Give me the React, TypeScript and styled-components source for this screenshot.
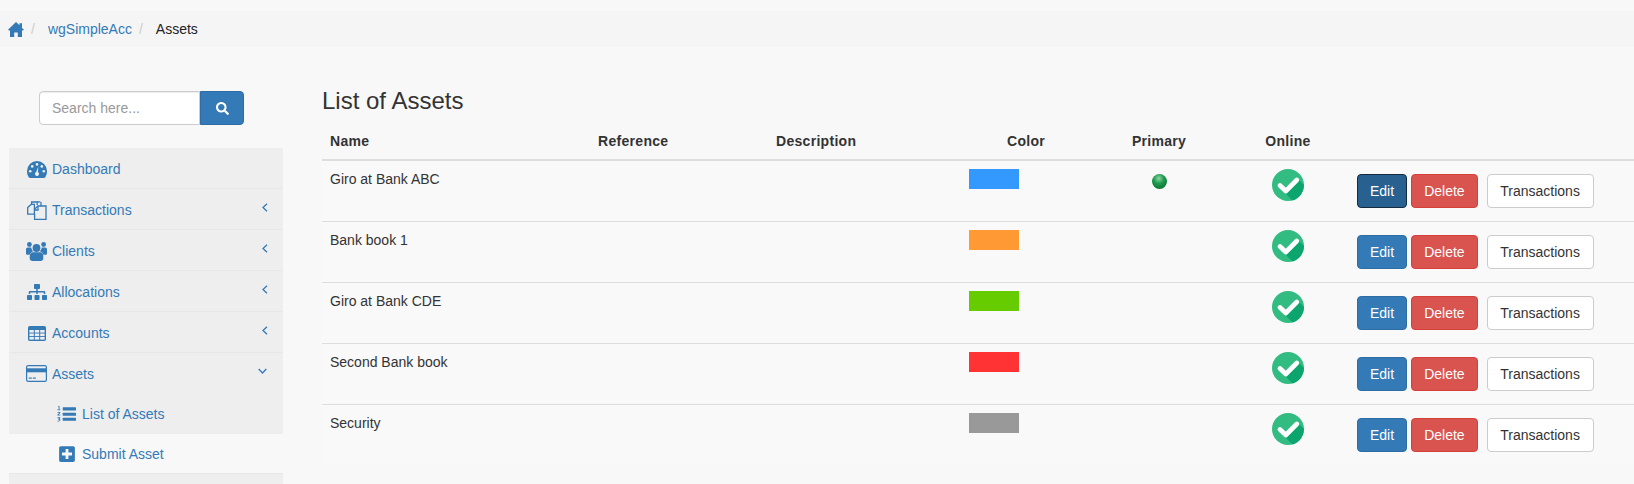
import styled, { createGlobalStyle } from 'styled-components';
import { FaPlusSquare, FaSearch, FaSitemap } from 'react-icons/fa';

const GlobalStyle = createGlobalStyle`
  html, body {
    margin: 0;
    padding: 0;
    height: 484px;
    overflow: hidden;
    background: #f8f8f8;
    color: #333;
    font-family: "Liberation Sans", Arial, sans-serif;
    font-size: 14px;
    line-height: 20px;
  }
  * { box-sizing: border-box; }
`;

const assets = [
  { name: 'Giro at Bank ABC', color: '#3399ff', primary: true, active: true },
  { name: 'Bank book 1', color: '#ff9933' },
  { name: 'Giro at Bank CDE', color: '#66cc00' },
  { name: 'Second Bank book', color: '#ff3333' },
  { name: 'Security', color: '#999999' },
];

const HomeIcon = () => (
  <svg width="16" height="15" viewBox="0 0 16 15" fill="currentColor">
    <path d="M8 0 11.500 3.200V1.200h2.500v4.800L16 7.800 15 8.600H14V15H9.800v-4.400H6.200V15H2V8.600H1L0 7.800z" />
  </svg>
);

const DashboardIcon = () => (
  <svg width="20" height="17" viewBox="0 0 20 17">
    <path d="M10 0a10 10 0 0 1 10 10c0 2.600-.7 4.600-1.600 6a2 2 0 0 1-1.600 1H3.200a2 2 0 0 1-1.600-1C.7 14.600 0 12.600 0 10A10 10 0 0 1 10 0z" fill="currentColor" />
    <g fill="#eee">
      <circle cx="3.200" cy="10.300" r="1.300" />
      <circle cx="5.200" cy="5.400" r="1.300" />
      <circle cx="10" cy="3.400" r="1.300" />
      <circle cx="16.800" cy="10.300" r="1.300" />
      <circle cx="14.800" cy="5.400" r="1.300" />
      <path d="M11.300 5.600 10.900 11.300a1.900 1.900 0 1 1-1.800 0z" />
    </g>
  </svg>
);

const FilesIcon = () => (
  <svg width="20" height="19" viewBox="0 0 20 19" fill="none" stroke="currentColor" strokeWidth="1.300">
    <path d="M.7 6.600 4.200 3.400h3.200v9.800H.7z" />
    <path d="M4.600 3V1h5.600v3" />
    <path d="M7.400 8.400 11 5h8v13.300H7.600V13" />
    <path d="M11 5.200V9H7.800" />
    <path d="M14 .9v4" />
    <path d="M10.200.9h3.200" />
  </svg>
);

const UsersIcon = () => (
  <svg width="21" height="19" viewBox="0 0 21 19" fill="currentColor">
    <circle cx="3.400" cy="2.500" r="2.400" />
    <circle cx="17.600" cy="2.500" r="2.400" />
    <circle cx="10.500" cy="6" r="3.900" />
    <path d="M1.800 5.400h3.400c.4 1.800 1 3 2.200 3.900-2 .6-3.300 1.900-3.800 3.500H1.500C.5 12.800 0 12.300 0 11.300V7.300C0 6.200.7 5.400 1.800 5.400z" />
    <path d="M19.200 5.400h-3.400c-.4 1.800-1 3-2.200 3.900 2 .6 3.300 1.900 3.800 3.500h2.100c1 0 1.500-.5 1.500-1.500V7.300c0-1.100-.7-1.900-1.800-1.900z" />
    <path d="M7 10.300h7c2 0 3.300 1.600 3.300 3.800v2.200c0 1.700-1.100 2.700-2.800 2.700H6.500c-1.700 0-2.800-1-2.800-2.700v-2.200c0-2.200 1.300-3.800 3.300-3.800z" />
  </svg>
);

const TableIcon = () => (
  <svg width="18" height="15" viewBox="0 0 18 15">
    <rect width="18" height="15" rx="1.800" fill="currentColor" />
    <g fill="#eee">
      {[1.4, 6.8, 12.2].map((x) =>
        [4, 7.5, 11].map((y) => <rect key={`${x}-${y}`} x={x} y={y} width="4.400" height="2.600" />)
      )}
    </g>
  </svg>
);

const CardIcon = () => (
  <svg width="21" height="17" viewBox="0 0 21 17">
    <rect x=".6" y=".6" width="19.800" height="15.800" rx="1.600" fill="none" stroke="currentColor" strokeWidth="1.200" />
    <rect x="1" y="3.300" width="19" height="4" fill="currentColor" />
    <rect x="2.800" y="12.500" width="3" height="1.200" fill="currentColor" />
    <rect x="6.800" y="12.500" width="3" height="1.200" fill="currentColor" />
  </svg>
);

const ListIcon = () => (
  <svg width="20" height="18" viewBox="0 0 20 18" fill="currentColor">
    <rect x="6" y="2" width="14" height="3.200" rx=".6" />
    <rect x="6" y="7.600" width="14" height="3.200" rx=".6" />
    <rect x="6" y="13" width="14" height="3.200" rx=".6" />
    <path d="M1 1.200 2.600.4v4.200H1.700V2zM.4 4.200h3.200v.8H.4z" />
    <path d="M.5 6.800h3v1.200L1.700 9.700h1.900v.8H.4v-.8L2.400 7.600H.5z" />
    <path d="M.5 12.400h3v1l-1 .9c.7.1 1.100.5 1.100 1.100 0 1-1 1.400-1.900 1.400H.5v-.8h1.600c.5 0 .6-.3.6-.5 0-.3-.3-.5-.8-.5H1.300v-.7l1-.8H.5z" />
  </svg>
);

const ChevronLeft = () => (
  <svg width="6" height="9" viewBox="0 0 6 9" fill="none" stroke="currentColor" strokeWidth="1.300">
    <path d="M5 .7 1 4.500 5 8.300" />
  </svg>
);

const ChevronDown = () => (
  <svg width="9" height="6" viewBox="0 0 9 6" fill="none" stroke="currentColor" strokeWidth="1.300">
    <path d="M.7 1 4.500 5 8.300 1" />
  </svg>
);

const OnlineIcon = () => (
  <svg width="32" height="32" viewBox="0 0 32 32">
    <circle cx="16" cy="16" r="16" fill="#33bc82" />
    <path d="M10 21l10.500 10.500A16 16 0 0 0 32 16L25.500 9.500z" fill="#0ca56d" />
    <path d="M8 16.500 13.800 22 24.800 11" fill="none" stroke="#fff" strokeWidth="4.800" strokeLinecap="round" strokeLinejoin="round" />
  </svg>
);

const App = () => {
  return (
    <>
      <GlobalStyle />
      <Breadcrumb>
        <Crumb>
          <HomeLink>
            <HomeIcon />
          </HomeLink>
        </Crumb>
        <Crumb>
          <CrumbLink>wgSimpleAcc</CrumbLink>
        </Crumb>
        <Crumb>Assets</Crumb>
      </Breadcrumb>
      <Page>
        <Sidebar>
          <SearchBar>
            <SearchInput placeholder="Search here..." />
            <SearchButton>
              <FaSearch size={13} />
            </SearchButton>
          </SearchBar>
          <Menu>
            <MenuItem>
              <MenuIcon>
                <DashboardIcon />
              </MenuIcon>
              Dashboard
            </MenuItem>
            <MenuItem>
              <MenuIcon>
                <FilesIcon />
              </MenuIcon>
              Transactions
              <Arrow>
                <ChevronLeft />
              </Arrow>
            </MenuItem>
            <MenuItem>
              <MenuIcon>
                <UsersIcon />
              </MenuIcon>
              Clients
              <Arrow>
                <ChevronLeft />
              </Arrow>
            </MenuItem>
            <MenuItem>
              <MenuIcon>
                <FaSitemap size={20} />
              </MenuIcon>
              Allocations
              <Arrow>
                <ChevronLeft />
              </Arrow>
            </MenuItem>
            <MenuItem>
              <MenuIcon>
                <TableIcon />
              </MenuIcon>
              Accounts
              <Arrow>
                <ChevronLeft />
              </Arrow>
            </MenuItem>
            <MenuItem $open>
              <MenuIcon>
                <CardIcon />
              </MenuIcon>
              Assets
              <Arrow $down>
                <ChevronDown />
              </Arrow>
            </MenuItem>
            <SubItem $current>
              <SubIcon>
                <ListIcon />
              </SubIcon>
              List of Assets
            </SubItem>
            <SubItem>
              <SubIcon>
                <FaPlusSquare size={18} />
              </SubIcon>
              Submit Asset
            </SubItem>
            <MenuRest />
          </Menu>
        </Sidebar>
        <Content>
          <Title>List of Assets</Title>
          <AssetTable>
            <colgroup>
              <col width={268} />
              <col width={178} />
              <col width={193} />
              <col width={130} />
              <col width={136} />
              <col width={122} />
              <col />
            </colgroup>
            <thead>
              <tr>
                <HeadCell>Name</HeadCell>
                <HeadCell>Reference</HeadCell>
                <HeadCell>Description</HeadCell>
                <HeadCell $center>Color</HeadCell>
                <HeadCell $center>Primary</HeadCell>
                <HeadCell $center>Online</HeadCell>
                <HeadCell />
              </tr>
            </thead>
            <tbody>
              {assets.map((asset) => (
                <tr key={asset.name}>
                  <Cell>{asset.name}</Cell>
                  <Cell />
                  <Cell />
                  <Cell>
                    <Swatch $color={asset.color} />
                  </Cell>
                  <Cell $center>{asset.primary && <PrimaryDot />}</Cell>
                  <Cell $center>
                    <OnlineIcon />
                  </Cell>
                  <Cell>
                    <Actions>
                      <Button $variant="primary" $active={asset.active}>
                        Edit
                      </Button>
                      <Button $variant="danger">Delete</Button>
                      <TransactionsButton $variant="default">Transactions</TransactionsButton>
                    </Actions>
                  </Cell>
                </tr>
              ))}
            </tbody>
          </AssetTable>
        </Content>
      </Page>
    </>
  );
};

const Breadcrumb = styled.ol`
  display: flex;
  align-items: center;
  height: 36px;
  margin: 11px 0 0;
  padding: 0 8px;
  list-style: none;
  background: #f5f5f5;
`;

const Crumb = styled.li`
  display: flex;
  align-items: center;
  color: #222;

  & + &::before {
    content: '/';
    padding: 0 13px 0 7px;
    color: #ccc;
  }
`;

const HomeLink = styled.a`
  display: flex;
  color: #337ab7;
`;

const CrumbLink = styled.a`
  color: #337ab7;
`;

const Page = styled.div`
  display: flex;
  align-items: flex-start;
  padding: 41px 0 0 9px;
`;

const Sidebar = styled.aside`
  flex: none;
  width: 274px;
  padding-top: 3px;
`;

const SearchBar = styled.div`
  display: flex;
  height: 34px;
  margin: 0 0 23px 30px;
`;

const SearchInput = styled.input`
  width: 161px;
  height: 34px;
  padding: 6px 12px;
  border: 1px solid #ccc;
  border-radius: 4px 0 0 4px;
  background: #fff;
  color: #555;
  font: 14px "Liberation Sans", Arial, sans-serif;
  box-shadow: inset 0 1px 1px rgba(0, 0, 0, 0.075);

  &::placeholder {
    color: #999;
  }
`;

const SearchButton = styled.button`
  display: flex;
  align-items: center;
  justify-content: center;
  width: 44px;
  height: 34px;
  margin: 0;
  padding: 0;
  border: 1px solid #2e6da4;
  border-radius: 0 4px 4px 0;
  background: #337ab7;
  color: #fff;
`;

const Menu = styled.nav`
  background: #eee;
`;

const MenuItem = styled.a<{ $open?: boolean }>`
  display: flex;
  align-items: center;
  height: 41px;
  padding: ${(p) => (p.$open ? '0' : '2px')} 15px 0 17px;
  color: #337ab7;
  border-bottom: ${(p) => (p.$open ? 'none' : '1px solid #e7e7e7')};
`;

const MenuIcon = styled.span`
  display: flex;
  flex: none;
  justify-content: center;
  width: 21px;
  margin-right: 5px;
`;

const Arrow = styled.span<{ $down?: boolean }>`
  display: flex;
  margin-left: auto;
  margin-right: ${(p) => (p.$down ? '1px' : '0')};
  margin-bottom: 5px;
`;

const SubItem = styled.a<{ $current?: boolean }>`
  display: flex;
  align-items: center;
  height: 40px;
  padding-left: 48px;
  color: #337ab7;
  background: ${(p) => (p.$current ? '#eee' : '#f8f8f8')};
  border-bottom: ${(p) => (p.$current ? 'none' : '1px solid #e7e7e7')};
`;

const SubIcon = styled.span`
  display: flex;
  flex: none;
  justify-content: center;
  width: 19px;
  margin-right: 6px;
`;

const MenuRest = styled.div`
  height: 10px;
`;

const Content = styled.main`
  flex: 1;
  min-width: 0;
  padding: 0 0 0 39px;
`;

const Title = styled.h3`
  margin: 0;
  height: 35px;
  color: #333;
  font-size: 24px;
  font-weight: 500;
  line-height: 26px;
`;

const AssetTable = styled.table`
  width: 100%;
  border-collapse: collapse;
  table-layout: fixed;
`;

const HeadCell = styled.th<{ $center?: boolean }>`
  height: 37px;
  padding: 8px;
  border-bottom: 2px solid #ddd;
  color: #333;
  font-size: 14px;
  font-weight: 700;
  letter-spacing: 0.3px;
  text-align: ${(p) => (p.$center ? 'center' : 'left')};
  vertical-align: bottom;
`;

const Cell = styled.td<{ $center?: boolean }>`
  height: 61px;
  padding: 8px;
  background: #f9f9f9;
  border-bottom: 1px solid #ddd;
  text-align: ${(p) => (p.$center ? 'center' : 'left')};
  vertical-align: top;

  tr:last-child > & {
    border-bottom: none;
  }

  svg {
    display: inline-block;
  }
`;

const Swatch = styled.div<{ $color: string }>`
  width: 50px;
  height: 20px;
  background: ${(p) => p.$color};
`;

const PrimaryDot = styled.span`
  display: inline-block;
  width: 15px;
  height: 15px;
  margin-top: 5px;
  border-radius: 50%;
  background: radial-gradient(circle at 45% 30%, #8fd8a0 0, #1f9a50 38%, #0d7a38 75%, #075a28 100%);
`;

const Actions = styled.div`
  display: flex;
  margin-top: 5px;
`;

const Button = styled.button<{ $variant: 'primary' | 'danger' | 'default'; $active?: boolean }>`
  height: 34px;
  padding: 6px 12px;
  border: 1px solid;
  border-radius: 4px;
  font: 14px/20px "Liberation Sans", Arial, sans-serif;
  margin-right: 4px;
  color: ${(p) => (p.$variant === 'default' ? '#333' : '#fff')};
  background: ${(p) =>
    p.$variant === 'primary' ? (p.$active ? '#286090' : '#337ab7') : p.$variant === 'danger' ? '#d9534f' : '#fff'};
  border-color: ${(p) =>
    p.$variant === 'primary' ? (p.$active ? '#122b40' : '#2e6da4') : p.$variant === 'danger' ? '#d43f3a' : '#ccc'};
`;

const TransactionsButton = styled(Button)`
  width: 107px;
  margin-left: 5px;
  padding: 6px 0;
`;

export default App;
